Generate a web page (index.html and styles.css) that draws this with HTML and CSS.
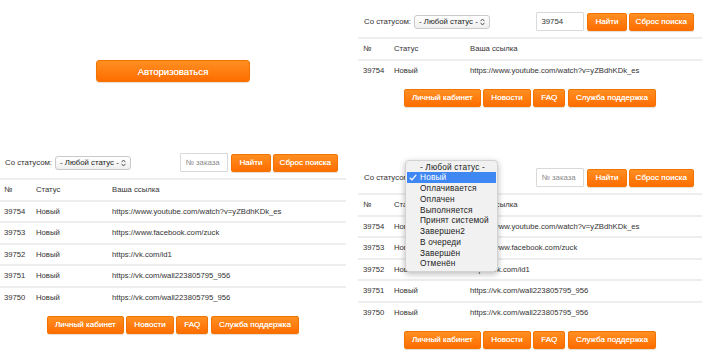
FILE: index.html
```html
<!DOCTYPE html>
<html lang="ru">
<head>
<meta charset="utf-8">
<title>Заказы</title>
<link rel="stylesheet" href="styles.css">
</head>
<body>
<div class="sheet">
  <div class="col">
    <section class="panel panel-login">
      <button class="btn btn-lg" type="button">Авторизоваться</button>
    </section>

    <section class="panel panel-list panel-left">
      <div class="filter">
        <span class="flt-label">Со статусом:</span>
        <span class="select"><span class="select-text">- Любой статус -</span>
          <svg class="arrows" width="5" height="8" viewBox="0 0 5 8"><path d="M0.6 3.2 L2.5 1 L4.4 3.2 M0.6 4.8 L2.5 7 L4.4 4.8" fill="none" stroke="#555" stroke-width="1"/></svg>
        </span>
        <span class="search">
          <input class="order-input" type="text" placeholder="№ заказа">
          <button class="btn btn-sm btn-find" type="button">Найти</button>
          <button class="btn btn-sm btn-reset" type="button">Сброс поиска</button>
        </span>
      </div>
      <table class="orders">
        <colgroup><col class="c-num"><col class="c-status"><col></colgroup>
        <tr><td>№</td><td>Статус</td><td>Ваша ссылка</td></tr>
        <tr><td>39754</td><td>Новый</td><td>https://www.youtube.com/watch?v=yZBdhKDk_es</td></tr>
        <tr><td>39753</td><td>Новый</td><td>https://www.facebook.com/zuck</td></tr>
        <tr><td>39752</td><td>Новый</td><td>https://vk.com/id1</td></tr>
        <tr><td>39751</td><td>Новый</td><td>https://vk.com/wall223805795_956</td></tr>
        <tr><td>39750</td><td>Новый</td><td>https://vk.com/wall223805795_956</td></tr>
      </table>
      <nav class="links">
        <button class="btn btn-sm" type="button">Личный кабинет</button>
        <button class="btn btn-sm" type="button">Новости</button>
        <button class="btn btn-sm" type="button">FAQ</button>
        <button class="btn btn-sm" type="button">Служба поддержка</button>
      </nav>
    </section>
  </div>

  <div class="col">
    <section class="panel panel-list panel-right panel-top">
      <div class="filter">
        <span class="flt-label">Со статусом:</span>
        <span class="select"><span class="select-text">- Любой статус -</span>
          <svg class="arrows" width="5" height="8" viewBox="0 0 5 8"><path d="M0.6 3.2 L2.5 1 L4.4 3.2 M0.6 4.8 L2.5 7 L4.4 4.8" fill="none" stroke="#555" stroke-width="1"/></svg>
        </span>
        <span class="search">
          <input class="order-input" type="text" value="39754">
          <button class="btn btn-sm btn-find" type="button">Найти</button>
          <button class="btn btn-sm btn-reset" type="button">Сброс поиска</button>
        </span>
      </div>
      <table class="orders">
        <colgroup><col class="c-num"><col class="c-status"><col></colgroup>
        <tr><td>№</td><td>Статус</td><td>Ваша ссылка</td></tr>
        <tr><td>39754</td><td>Новый</td><td>https://www.youtube.com/watch?v=yZBdhKDk_es</td></tr>
      </table>
      <nav class="links">
        <button class="btn btn-sm" type="button">Личный кабинет</button>
        <button class="btn btn-sm" type="button">Новости</button>
        <button class="btn btn-sm" type="button">FAQ</button>
        <button class="btn btn-sm" type="button">Служба поддержка</button>
      </nav>
    </section>

    <section class="panel panel-list panel-right">
      <div class="filter">
        <span class="flt-label">Со статусом:</span>
        <span class="select"><span class="select-text">- Любой статус -</span>
          <svg class="arrows" width="5" height="8" viewBox="0 0 5 8"><path d="M0.6 3.2 L2.5 1 L4.4 3.2 M0.6 4.8 L2.5 7 L4.4 4.8" fill="none" stroke="#555" stroke-width="1"/></svg>
          <ul class="dropdown">
            <li>- Любой статус -</li>
            <li class="sel"><svg class="check" width="8" height="7" viewBox="0 0 8 7"><path d="M0.8 3.8 L2.9 5.9 L7.2 0.8" fill="none" stroke="#fff" stroke-width="1.3"/></svg>Новый</li>
            <li>Оплачивается</li>
            <li>Оплачен</li>
            <li>Выполняется</li>
            <li>Принят системой</li>
            <li>Завершен2</li>
            <li>В очереди</li>
            <li>Завершён</li>
            <li>Отменён</li>
          </ul>
        </span>
        <span class="search">
          <input class="order-input" type="text" placeholder="№ заказа">
          <button class="btn btn-sm btn-find" type="button">Найти</button>
          <button class="btn btn-sm btn-reset" type="button">Сброс поиска</button>
        </span>
      </div>
      <table class="orders">
        <colgroup><col class="c-num"><col class="c-status"><col></colgroup>
        <tr><td>№</td><td>Статус</td><td>Ваша ссылка</td></tr>
        <tr><td>39754</td><td>Новый</td><td>https://www.youtube.com/watch?v=yZBdhKDk_es</td></tr>
        <tr><td>39753</td><td>Новый</td><td>https://www.facebook.com/zuck</td></tr>
        <tr><td>39752</td><td>Новый</td><td>https://vk.com/id1</td></tr>
        <tr><td>39751</td><td>Новый</td><td>https://vk.com/wall223805795_956</td></tr>
        <tr><td>39750</td><td>Новый</td><td>https://vk.com/wall223805795_956</td></tr>
      </table>
      <nav class="links">
        <button class="btn btn-sm" type="button">Личный кабинет</button>
        <button class="btn btn-sm" type="button">Новости</button>
        <button class="btn btn-sm" type="button">FAQ</button>
        <button class="btn btn-sm" type="button">Служба поддержка</button>
      </nav>
    </section>
  </div>
</div>
</body>
</html>
```

FILE: styles.css
```css
html, body {
  margin: 0;
  padding: 0;
  background: #fff;
}
body {
  font-family: "Liberation Sans", Arial, Helvetica, sans-serif;
  color: #333;
}
.sheet {
  display: grid;
  grid-template-columns: 351px 351px;
  width: 702px;
  height: 361px;
  overflow: hidden;
}
.col {
  display: flex;
  flex-direction: column;
}
.panel {
  box-sizing: border-box;
}
.panel-login {
  height: 141px;
  display: flex;
  align-items: center;
  justify-content: center;
  padding-right: 5px;
}
.panel-list {
  padding-top: 12px;
}
.panel-left {
  padding-right: 5px;
}
.panel-right {
  padding-left: 7px;
}
.panel-top {
  height: 156px;
}

/* buttons */
.btn {
  box-sizing: border-box;
  font-family: "Liberation Sans", Arial, Helvetica, sans-serif;
  color: #fff;
  background: linear-gradient(#ff8f22, #ff6d00);
  border: 1px solid #f27300;
  border-radius: 2px;
  box-shadow: 0 1px 1px rgba(120, 60, 0, 0.18);
  text-shadow: 0 0 0.3px rgba(255, 255, 255, 0.8);
  cursor: pointer;
  margin: 0;
  white-space: nowrap;
}
.btn-lg {
  width: 154px;
  height: 22px;
  font-size: 9.6px;
  border-radius: 3px;
  margin-top: 1px;
}
.btn-sm {
  height: 18px;
  padding: 0 7px;
  font-size: 8.1px;
  line-height: 16px;
}
.btn-find {
  min-width: 38px;
}
.btn-reset {
  padding: 0 6px;
}

/* filter row */
.filter {
  display: flex;
  align-items: center;
  height: 19px;
  padding: 0 8px 0 6px;
  margin-bottom: 6px;
  font-size: 7.8px;
}
.panel-left .filter {
  padding-left: 5px;
}
.flt-label {
  margin-right: 3px;
  white-space: nowrap;
}
.select {
  position: relative;
  display: flex;
  align-items: center;
  box-sizing: border-box;
  width: 76px;
  height: 14px;
  padding-left: 4px;
  border: 1px solid #cacaca;
  border-radius: 3px;
  background: linear-gradient(#ffffff, #efefef);
  font-size: 7.8px;
  color: #222;
  white-space: nowrap;
}
.arrows {
  margin-left: auto;
  margin-right: 4px;
}
.search {
  margin-left: auto;
  display: flex;
  align-items: center;
  gap: 2px;
}
.order-input {
  box-sizing: border-box;
  width: 48px;
  height: 19px;
  margin: 0 1px 0 0;
  padding: 0 4px;
  border: 1px solid #d9d9d9;
  border-radius: 1px;
  font-family: "Liberation Sans", Arial, Helvetica, sans-serif;
  font-size: 7.8px;
  color: #333;
  background: #fff;
}
.order-input::placeholder {
  color: #8a8a8a;
}

/* table */
.orders {
  width: 100%;
  table-layout: fixed;
  border-collapse: separate;
  border-spacing: 0;
  font-size: 7.7px;
}
.c-num { width: 31px; }
.c-status { width: 76px; }
.orders td {
  padding: 0 5px;
  line-height: 19.5px;
  border-top: 2px solid #eeeeee;
  white-space: nowrap;
  color: #333;
}
.panel-left .orders td:first-child {
  padding-left: 4px;
}

/* bottom links */
.links {
  display: flex;
  justify-content: center;
  gap: 2.5px;
  margin-top: 8.5px;
}

/* opened native-like dropdown */
.dropdown {
  position: absolute;
  top: -12px;
  left: -10px;
  width: 93px;
  margin: 0;
  padding: 1px 0 2px;
  list-style: none;
  box-sizing: border-box;
  background: #f1f1f1;
  border: 1px solid #d2d2d2;
  border-radius: 4px;
  box-shadow: 0 2px 6px rgba(0, 0, 0, 0.28);
  z-index: 5;
  text-align: left;
}
.dropdown li {
  position: relative;
  height: 10.75px;
  line-height: 10.75px;
  margin: 0 1px;
  padding-left: 13px;
  font-size: 8.3px;
  letter-spacing: 0.15px;
  color: #222;
  text-align: left;
}
.dropdown li.sel {
  background: #3f88f4;
  color: #fff;
}
.check {
  position: absolute;
  left: 2px;
  top: 2px;
}
```
